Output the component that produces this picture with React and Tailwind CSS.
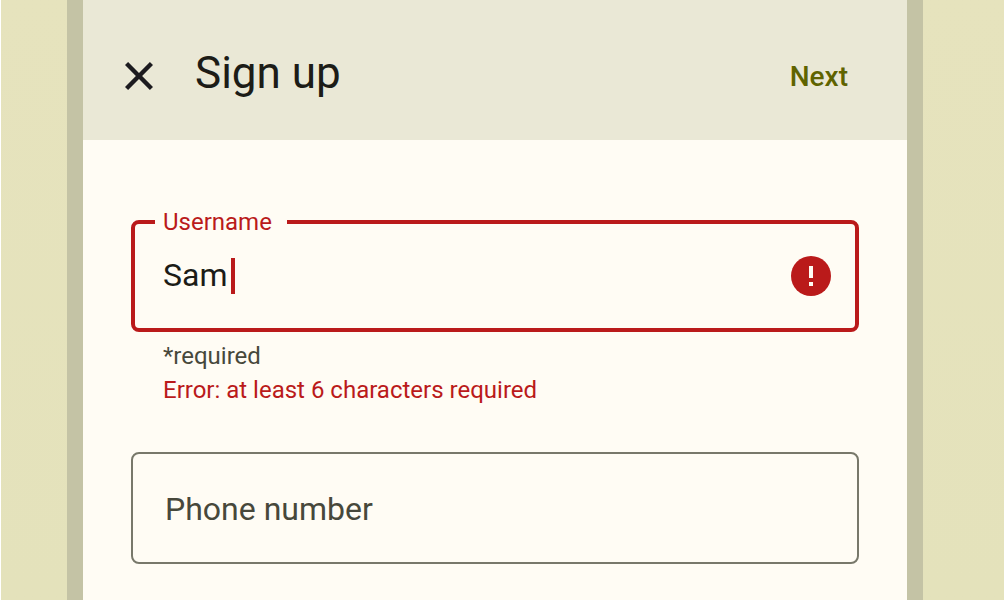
import { useState } from "react";

function CloseIcon() {
  return (
    <svg viewBox="0 0 28 28" className="size-7" fill="#1c1b1f" aria-hidden="true">
      <path d="M3.1 28 0 24.9 10.9 14 0 3.1 3.1 0 14 10.9 24.9 0 28 3.1 17.1 14 28 24.9 24.9 28 14 17.1Z" />
    </svg>
  );
}

function ErrorIcon() {
  return (
    <svg viewBox="0 0 40 40" className="size-10 shrink-0" role="img" aria-label="Error">
      <circle cx="20" cy="20" r="20" fill="#ba1a1a" />
      <path d="M18 10h4v12h-4zM18 26h4v4h-4z" fill="#fffcf4" />
    </svg>
  );
}

function AppBar() {
  return (
    <header className="flex h-[140px] items-center bg-[#eae8d6] pt-3 pr-[59px] pl-[42px]">
      <button type="button" aria-label="Close" className="shrink-0">
        <CloseIcon />
      </button>
      <h1 className="ml-[42px] flex-1 pb-1.5 text-[44px] leading-[56px] text-[#1c1c17]">Sign up</h1>
      <button type="submit" className="pt-0.5 text-[28px] leading-10 font-medium text-[#5f6300]">
        Next
      </button>
    </header>
  );
}

function UsernameField() {
  const [name, setName] = useState("Sam");
  return (
    <div>
      <div className="relative flex h-28 items-center rounded-lg border-4 border-[#ba1a1a] pr-6 pl-7">
        <label
          htmlFor="username"
          className="absolute -top-[18px] left-5 bg-[#fffcf4] pr-[15px] pl-2 text-2xl leading-8 text-[#ba1a1a]"
        >
          Username
        </label>
        <div className="flex min-w-0 flex-1 items-center gap-1">
          <input
            id="username"
            type="text"
            value={name}
            onChange={(e) => setName(e.target.value)}
            aria-invalid="true"
            aria-describedby="username-help username-error"
            className="field-sizing-content max-w-full bg-transparent pb-0.5 text-[32px] leading-10 text-[#1c1c17] caret-transparent outline-none"
          />
          <span className="h-9 w-1 shrink-0 bg-[#ba1a1a]" aria-hidden="true" />
        </div>
        <ErrorIcon />
      </div>
      <div className="px-8 pt-[7px] text-2xl leading-[34px]">
        <p id="username-help" className="text-[#47483b]">*required</p>
        <p id="username-error" className="text-[#ba1a1a]">Error: at least 6 characters required</p>
      </div>
    </div>
  );
}

function PhoneField() {
  return (
    <input
      type="tel"
      aria-label="Phone number"
      placeholder="Phone number"
      className="h-28 w-full rounded-lg border-2 border-[#78786a] bg-transparent px-8 pt-0.5 text-[32px] leading-10 text-[#1c1c17] outline-none placeholder:text-[#47483b] placeholder:opacity-100"
    />
  );
}

export default function App() {
  return (
    <div className="border-l border-white font-[Roboto,sans-serif]">
      <div className="flex min-h-screen bg-linear-to-b from-[#e6e3bd] to-[#e4e2bb] pr-[81px] pl-[66px]">
        <form
          className="min-w-0 flex-1 border-x-16 border-[#c4c3a5] bg-[#fffcf4]"
          onSubmit={(e) => e.preventDefault()}
        >
          <AppBar />
          <main className="flex flex-col gap-[45px] px-12 pt-20 pb-9">
            <UsernameField />
            <PhoneField />
          </main>
        </form>
      </div>
    </div>
  );
}
